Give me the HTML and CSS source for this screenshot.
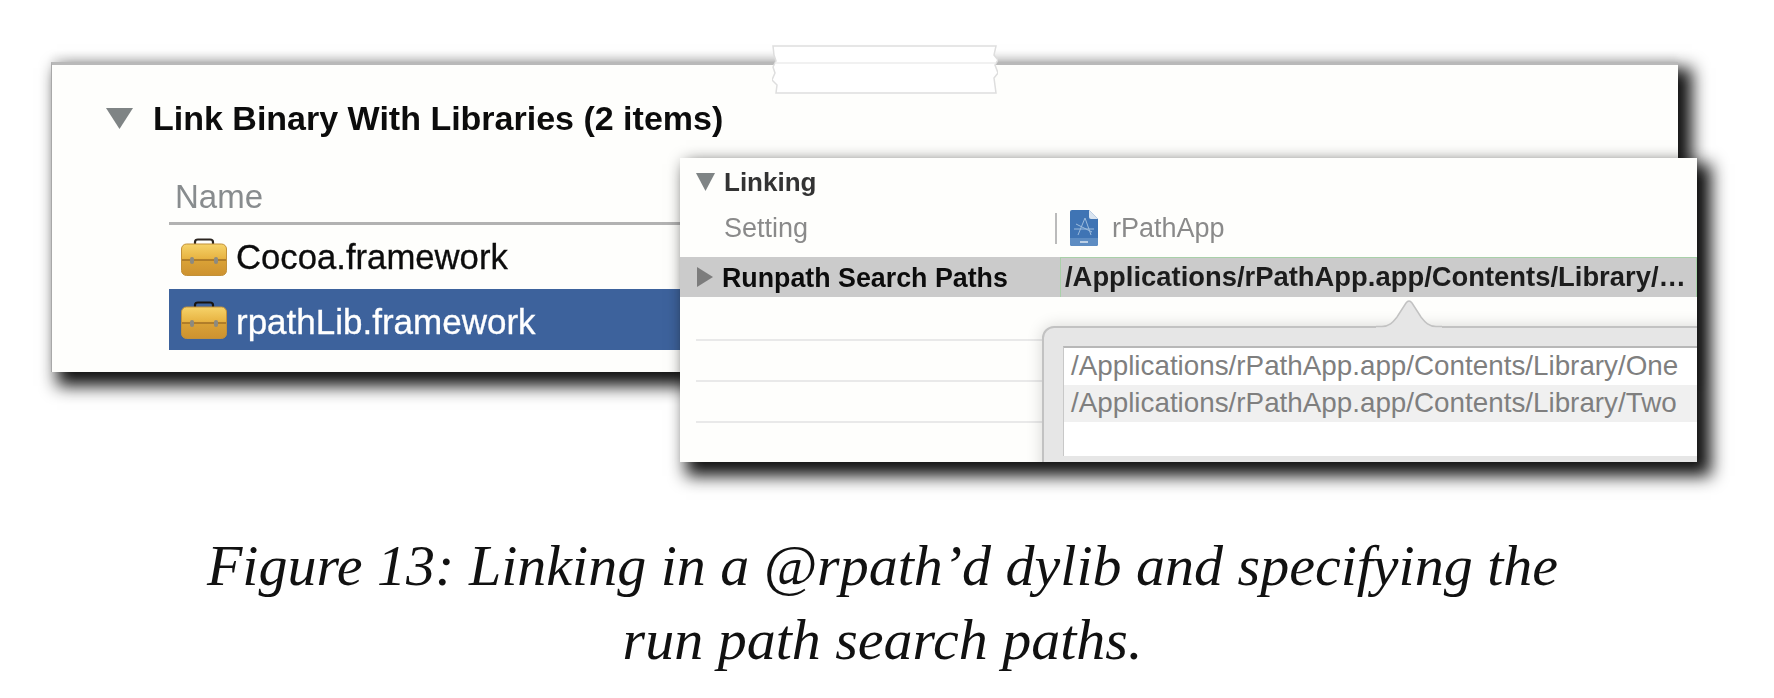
FILE: index.html
```html
<!DOCTYPE html>
<html lang="en">
  <head>
    <meta charset="UTF-8" />
    <title>Figure 13</title>
    <link rel="stylesheet" href="styles.css">
  </head>
  <body>
    <div class="shot">
      <div class="panel">
        <div class="title-row">
          <svg class="tri-down" viewBox="0 0 27 21"><path d="M0 0H27L13.500 21Z" /></svg>
          <span class="title">Link Binary With Libraries (2 items)</span>
        </div>
        <div class="table">
          <div class="table-head">Name</div>
          <div class="table-row">
            <svg class="toolbox" viewBox="0 0 46 38">
              <defs>
                <linearGradient id="box1" x1="0" y1="0" x2="0" y2="1">
                  <stop offset="0" stop-color="#f6d36a" />
                  <stop offset="0.45" stop-color="#e8b443" />
                  <stop offset="0.55" stop-color="#d9a136" />
                  <stop offset="1" stop-color="#cd9230" />
                </linearGradient>
              </defs>
              <path d="M14 9V4Q14 1.500 17 1.500H29Q32 1.500 32 4V9" fill="none" stroke="#2b2520" stroke-width="2.200" />
              <rect x="0.500" y="6" width="45" height="31.500" rx="5" fill="url(#box1)" stroke="#c2913a" />
              <path d="M1 22H45" stroke="#a06f24" stroke-width="1.500" />
              <rect x="9" y="19" width="4" height="7" rx="2" fill="#8c8a80" />
              <rect x="33" y="19" width="4" height="7" rx="2" fill="#8c8a80" />
            </svg>
            <span>Cocoa.framework</span>
          </div>
          <div class="table-row selected">
            <svg class="toolbox" viewBox="0 0 46 38">
              <path d="M14 9V4Q14 1.500 17 1.500H29Q32 1.500 32 4V9" fill="none" stroke="#17130f" stroke-width="2.200" />
              <rect x="0.500" y="6" width="45" height="31.500" rx="5" fill="url(#box1)" stroke="#c2913a" />
              <path d="M1 22H45" stroke="#a06f24" stroke-width="1.500" />
              <rect x="9" y="19" width="4" height="7" rx="2" fill="#8c8a80" />
              <rect x="33" y="19" width="4" height="7" rx="2" fill="#8c8a80" />
            </svg>
            <span>rpathLib.framework</span>
          </div>
        </div>
      </div>

      <svg class="tape" viewBox="0 0 226 53">
        <path d="M1 3H224L222 12L226 17L223 22L226 30L222 35L224 50H4L5 42L0 37L3 30L1 24L4 18L2 12Z" />
        <path class="tape-line" d="M3 20H224" />
      </svg>

      <div class="panel-front">
        <div class="front-head">
          <svg class="tri-small" viewBox="0 0 19 18"><path d="M0 0H19L9.500 18Z" /></svg>
          <span>Linking</span>
        </div>
        <div class="front-setting">
          <span class="setting-label">Setting</span>
          <span class="divider"></span>
          <svg class="doc" viewBox="0 0 28 36">
            <path d="M0 2Q0 0 2 0H19L28 9V34Q28 36 26 36H2Q0 36 0 34Z" fill="#3f74b4" />
            <path d="M19 0L28 9H21Q19 9 19 7Z" fill="#d9e4f0" />
            <path d="M0 28H28V34Q28 36 26 36H2Q0 36 0 34Z" fill="#5d8cc2" />
            <path d="M8 25L15 8M15 8L21 25M4 19H24M6 14L22 22" fill="none" stroke="#9dbcdd" stroke-width="1" />
            <path d="M10 32H18" stroke="#dbe6f2" stroke-width="1.500" />
          </svg>
          <span>rPathApp</span>
        </div>
        <div class="front-run">
          <div class="run-name">
            <svg class="tri-right" viewBox="0 0 16 20"><path d="M0 0L16 10L0 20Z" /></svg>
            <span>Runpath Search Paths</span>
          </div>
          <div class="run-value">/Applications/rPathApp.app/Contents/Library/…</div>
        </div>
        <div class="empty-row first"></div>
        <div class="empty-row"></div>
        <div class="empty-row"></div>

        <div class="popover">
          <svg class="popover-arrow" viewBox="0 0 66 30">
            <path d="M0 28.500H6C14 28.500 17 24 21 19L30 5Q33 1 36 5L45 19C49 24 52 28.500 60 28.500H66V30H0Z" fill="#e6e6e6" />
            <path d="M0 28.500H6C14 28.500 17 24 21 19L30 5Q33 1 36 5L45 19C49 24 52 28.500 60 28.500H66" fill="none" stroke="#c2c2c2" stroke-width="1.500" />
          </svg>
          <div class="path-list">
            <div class="path-row">/Applications/rPathApp.app/Contents/Library/One</div>
            <div class="path-row alt">/Applications/rPathApp.app/Contents/Library/Two</div>
          </div>
        </div>
      </div>
    </div>

    <p class="caption">Figure 13: Linking in a @rpath’d dylib and specifying the<br />run path search paths.</p>
  </body>
</html>
```

FILE: styles.css
```css
body {
  margin: 0;
  background: #fff;
  overflow: hidden;
}
.shot {
  position: relative;
  height: 486px;
  padding: 62px 0 0 51px;
  box-sizing: border-box;
  font-family: "Liberation Sans", Arial, sans-serif;
  filter: blur(0.6px);
}

/* back panel */
.panel {
  box-sizing: border-box;
  width: 1627px;
  height: 310px;
  padding-top: 33px;
  background: #fefefc;
  border-top: 3px solid #b9b9b9;
  border-left: 1px solid #a8a8a8;
  box-shadow: 10px 10px 16px 4px #111, 0 -7px 8px rgba(0, 0, 0, 0.05);
}
.title-row {
  display: flex;
  align-items: center;
  height: 40px;
  padding-left: 54px;
  gap: 20px;
}
.tri-down {
  width: 27px;
  height: 21px;
  fill: #7f8485;
}
.title {
  font-size: 34px;
  font-weight: bold;
  color: #0c0c0c;
}
.table {
  margin: 34px 30px 0 117px;
}
.table-head {
  box-sizing: border-box;
  height: 53px;
  padding-left: 6px;
  font-size: 33px;
  line-height: 50px;
  color: #888c8e;
  border-bottom: 3px solid #b2b2b2;
}
.table-row {
  display: flex;
  align-items: center;
  gap: 9px;
  height: 64px;
  padding-left: 12px;
  font-size: 34.700px;
  color: #0c0c0c;
  -webkit-text-stroke: 0.3px currentColor;
}
.table-row.selected {
  height: 61px;
  background: #3d629c;
  color: #fff;
  font-size: 35px;
}
.table-row.selected span {
  padding-top: 4px;
}
.toolbox {
  width: 46px;
  height: 38px;
}

/* tape over the top edge */
.tape {
  position: absolute;
  left: 772px;
  top: 43px;
  width: 226px;
  height: 53px;
  fill: #fff;
  stroke: #dedede;
  stroke-width: 1.500;
}
.tape-line {
  stroke: #ececec;
  fill: none;
}

/* front panel */
.panel-front {
  position: absolute;
  left: 680px;
  top: 158px;
  width: 1017px;
  height: 304px;
  overflow: hidden;
  background: #fefefc;
  box-shadow: 10px 10px 16px 4px #111;
}
.front-head {
  display: flex;
  align-items: center;
  gap: 9px;
  height: 48px;
  padding-left: 16px;
  font-size: 26px;
  font-weight: bold;
  color: #333;
}
.tri-small {
  width: 19px;
  height: 18px;
  fill: #7f8485;
}
.front-setting {
  display: flex;
  align-items: center;
  height: 44px;
  font-size: 27px;
  color: #8a8a8a;
}
.setting-label {
  width: 331px;
  padding-left: 44px;
}
.divider {
  width: 2px;
  height: 31px;
  margin-right: 13px;
  background: #bbb;
}
.doc {
  width: 28px;
  height: 36px;
  margin-right: 14px;
}
.front-run {
  display: flex;
  height: 40px;
  margin-top: 7px;
  background: #cbcbcb;
  font-weight: bold;
  color: #0c0c0c;
}
.run-name {
  display: flex;
  align-items: center;
  gap: 9px;
  width: 363px;
  padding-left: 17px;
  font-size: 26.800px;
}
.run-name span {
  padding-top: 2px;
}
.tri-right {
  width: 16px;
  height: 20px;
  fill: #7c7c7c;
}
.run-value {
  flex: 1;
  padding-left: 4px;
  font-size: 27.400px;
  line-height: 38px;
  white-space: nowrap;
  border: 1px solid #a9d0a9;
  border-bottom: 0;
  color: #1c1c1c;
}
.empty-row {
  box-sizing: border-box;
  height: 41px;
  margin-left: 16px;
  border-bottom: 2px solid #e9e9e9;
}
.empty-row.first {
  margin-top: 3px;
}

/* popover under the value */
.popover {
  position: absolute;
  left: 362px;
  top: 168px;
  right: -20px;
  bottom: -20px;
  padding: 18px 0 24px 19px;
  box-sizing: border-box;
  background: #e6e6e6;
  border: 2px solid #c2c2c2;
  border-radius: 12px 0 0 0;
  box-shadow: 0 0 16px rgba(0, 0, 0, 0.16);
}
.popover-arrow {
  position: absolute;
  left: 332px;
  top: -30px;
  width: 66px;
  height: 30px;
}
.path-list {
  height: 100%;
  box-sizing: border-box;
  background: #fff;
  border-top: 2px solid #b8b8b8;
  border-left: 1px solid #c8c8c8;
  font-size: 27.800px;
  color: #7f7f7f;
}
.path-row {
  height: 37px;
  padding-left: 7px;
  line-height: 36px;
  white-space: nowrap;
}
.path-row.alt {
  background: #f0f0f0;
}

.caption {
  margin: 43px 9px 0 0;
  font-family: "Liberation Serif", "Times New Roman", serif;
  font-style: italic;
  font-size: 58px;
  line-height: 73.500px;
  text-align: center;
  color: #111;
}
```
